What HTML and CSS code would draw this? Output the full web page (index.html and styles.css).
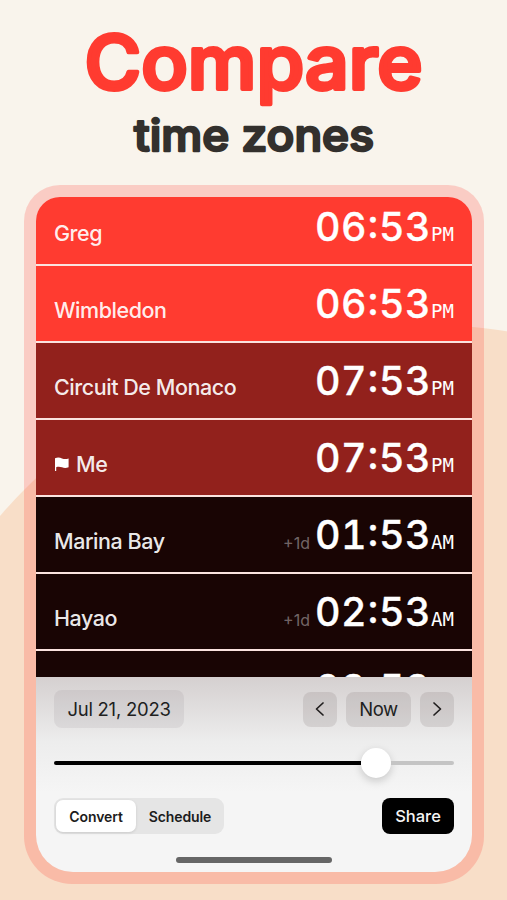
FILE: index.html
```html
<!DOCTYPE html>
<html lang="en">
  <head>
    <meta charset="UTF-8" />
    <meta name="viewport" content="width=device-width, initial-scale=1.0" />
    <title>Compare time zones</title>
    <link rel="stylesheet" href="styles.css">
  </head>
  <body>
    <svg class="headline" width="507" height="185" viewBox="0 0 507 185">
      <text class="title" x="84.5" y="88.5" textLength="338" lengthAdjust="spacingAndGlyphs">Compare</text>
      <text class="subtitle" x="134" y="151" textLength="240" lengthAdjust="spacingAndGlyphs">time zones</text>
    </svg>

    <div class="frame">
      <div class="screen">
        <div class="zones">
          <div class="zone day first">
            <span class="name">Greg</span>
            <span class="time">06<span class="colon">:</span>53</span>
            <span class="period">PM</span>
          </div>
          <div class="zone day">
            <span class="name">Wimbledon</span>
            <span class="time">06<span class="colon">:</span>53</span>
            <span class="period">PM</span>
          </div>
          <div class="zone evening">
            <span class="name">Circuit De Monaco</span>
            <span class="time">07<span class="colon">:</span>53</span>
            <span class="period">PM</span>
          </div>
          <div class="zone evening">
            <span class="name">
              <svg class="flag" width="16" height="15" viewBox="0 0 16 15">
                <path d="M1 1.2C4 0 6 .6 8 1.4s4 .9 6.600 .1V10.200C12 11.200 10 11 8 10.300S4 9.500 2.200 10.200V14H1z" />
              </svg>Me
            </span>
            <span class="time">07<span class="colon">:</span>53</span>
            <span class="period">PM</span>
          </div>
          <div class="zone night">
            <span class="name">Marina Bay</span>
            <span class="offset">+1d</span>
            <span class="time">01<span class="colon">:</span>53</span>
            <span class="period">AM</span>
          </div>
          <div class="zone night">
            <span class="name">Hayao</span>
            <span class="offset">+1d</span>
            <span class="time">02<span class="colon">:</span>53</span>
            <span class="period">AM</span>
          </div>
          <div class="zone night">
            <span class="name"></span>
            <span class="time">03<span class="colon">:</span>53</span>
            <span class="period"></span>
          </div>
        </div>

        <div class="panel">
          <div class="date-row">
            <button class="chip date">Jul 21, 2023</button>
            <button class="chip arrow">
              <svg width="10" height="16" viewBox="0 0 10 16"><path d="M8 2 1.500 8 8 14" /></svg>
            </button>
            <button class="chip now">Now</button>
            <button class="chip arrow">
              <svg width="10" height="16" viewBox="0 0 10 16"><path d="M2 2 8.500 8 2 14" /></svg>
            </button>
          </div>
          <div class="slider">
            <div class="track-fill"></div>
            <div class="thumb"></div>
            <div class="track-rest"></div>
          </div>
          <div class="action-row">
            <div class="segmented">
              <button class="segment active">Convert</button>
              <button class="segment">Schedule</button>
            </div>
            <button class="share">Share</button>
          </div>
          <div class="home-bar"></div>
        </div>
      </div>
    </div>
  </body>
</html>
```
FILE: styles.css
```css
* {
  box-sizing: border-box;
}
body {
  margin: 0;
  width: 507px;
  height: 900px;
  overflow: hidden;
  font-family: Inter, "Liberation Sans", sans-serif;
  background: radial-gradient(circle at 420px 881px, #f8dec8 556px, #f9f4ec 557px);
}
button {
  border: none;
  padding: 0;
  font-family: inherit;
  color: inherit;
}
.headline {
  display: block;
}
.headline text {
  stroke-linejoin: round;
  font-weight: 500;
}
.title {
  font-size: 74px;
  fill: #ff3b30;
  stroke: #ff3b30;
  stroke-width: 4px;
}
.subtitle {
  font-size: 44px;
  fill: #33302d;
  stroke: #33302d;
  stroke-width: 2.400px;
}
.frame {
  width: 460px;
  height: 699px;
  margin-left: 24px;
  padding: 12px;
  border-radius: 36px 36px 48px 48px;
  background-color: rgba(255, 59, 48, 0.21);
}
.screen {
  display: flex;
  flex-direction: column;
  height: 675px;
  border-radius: 24px 24px 37px 37px;
  overflow: hidden;
}
.zones {
  display: flex;
  flex-direction: column;
  gap: 2.500px;
  height: 480px;
  overflow: hidden;
  background-color: #fbe3df;
}
.zone {
  display: flex;
  flex: none;
  align-items: baseline;
  height: 74.500px;
  padding: 14px 18px 0;
  color: white;
}
.zone.first {
  height: 66.500px;
  padding-top: 6px;
}
.day {
  background-color: #ff3b30;
}
.evening {
  background-color: #92211c;
}
.night {
  background-color: #190504;
}
.name {
  flex: 1;
  font-size: 21.500px;
  font-weight: 500;
  letter-spacing: -0.45px;
  color: rgba(255, 255, 255, 0.93);
}
.flag {
  margin-right: 6px;
  fill: white;
}
.offset {
  margin-right: 5px;
  font-size: 16px;
  color: rgba(255, 255, 255, 0.4);
}
.time {
  font-size: 39.500px;
  line-height: 48px;
  font-weight: 500;
  font-variant-numeric: tabular-nums;
  letter-spacing: 0.4px;
  -webkit-text-stroke: 0.3px white;
}
.colon {
  display: inline-block;
  width: 12px;
  font-variant-numeric: normal;
  /* centres the dots on the digits */
  transform: translateY(-3px);
}
.period {
  width: 23px;
  font-family: "DejaVu Sans Mono", monospace;
  font-size: 19px;
}
.panel {
  flex: 1;
  padding: 13px 18px 0;
  background: linear-gradient(#d5d0d0, #dedbdb 25px, #ededed 65px, #f5f5f5 115px);
}
.date-row {
  display: flex;
  align-items: center;
  gap: 9px;
}
.chip {
  height: 35px;
  border-radius: 8px;
  font-size: 18.500px;
  color: #211f1f;
  background-color: rgba(90, 75, 75, 0.14);
}
.date {
  width: 130px;
  height: 38px;
  margin-right: auto;
  letter-spacing: -0.25px;
  background-color: rgba(90, 80, 85, 0.09);
}
.arrow {
  display: grid;
  place-items: center;
  width: 34px;
}
.arrow svg {
  fill: none;
  stroke: #211f1f;
  stroke-width: 1.700;
  stroke-linecap: round;
  stroke-linejoin: round;
}
.now {
  width: 65px;
  letter-spacing: -0.4px;
}
.slider {
  display: flex;
  align-items: center;
  height: 30px;
  margin-top: 20px;
}
.track-fill {
  width: 307px;
  height: 4px;
  border-radius: 2px 0 0 2px;
  background-color: black;
}
.thumb {
  width: 30px;
  height: 30px;
  border-radius: 50%;
  background-color: white;
  box-shadow: 0 3px 8px rgba(0, 0, 0, 0.18);
}
.track-rest {
  flex: 1;
  height: 4px;
  border-radius: 0 2px 2px 0;
  background-color: #c4c4c4;
}
.action-row {
  display: flex;
  justify-content: space-between;
  margin-top: 20px;
}
.segmented {
  display: flex;
  width: 170px;
  height: 36px;
  padding: 2px;
  border-radius: 9px;
  background-color: #e5e5e5;
}
.segment {
  flex: 1;
  border-radius: 7px;
  font-size: 14px;
  font-weight: 600;
  letter-spacing: -0.1px;
  color: #1c1c1c;
  background: none;
}
.segment:last-child {
  padding-left: 2px;
}
.segment.active {
  flex: 0 0 80px;
  background-color: white;
  box-shadow: 0 1px 3px rgba(0, 0, 0, 0.12);
}
.share {
  width: 72px;
  height: 36px;
  border-radius: 8px;
  font-size: 16.500px;
  font-weight: 500;
  color: #f5f5f5;
  background-color: black;
}
.home-bar {
  width: 156px;
  height: 6px;
  margin: 23px auto 0;
  border-radius: 3px;
  background-color: #666;
}
```
